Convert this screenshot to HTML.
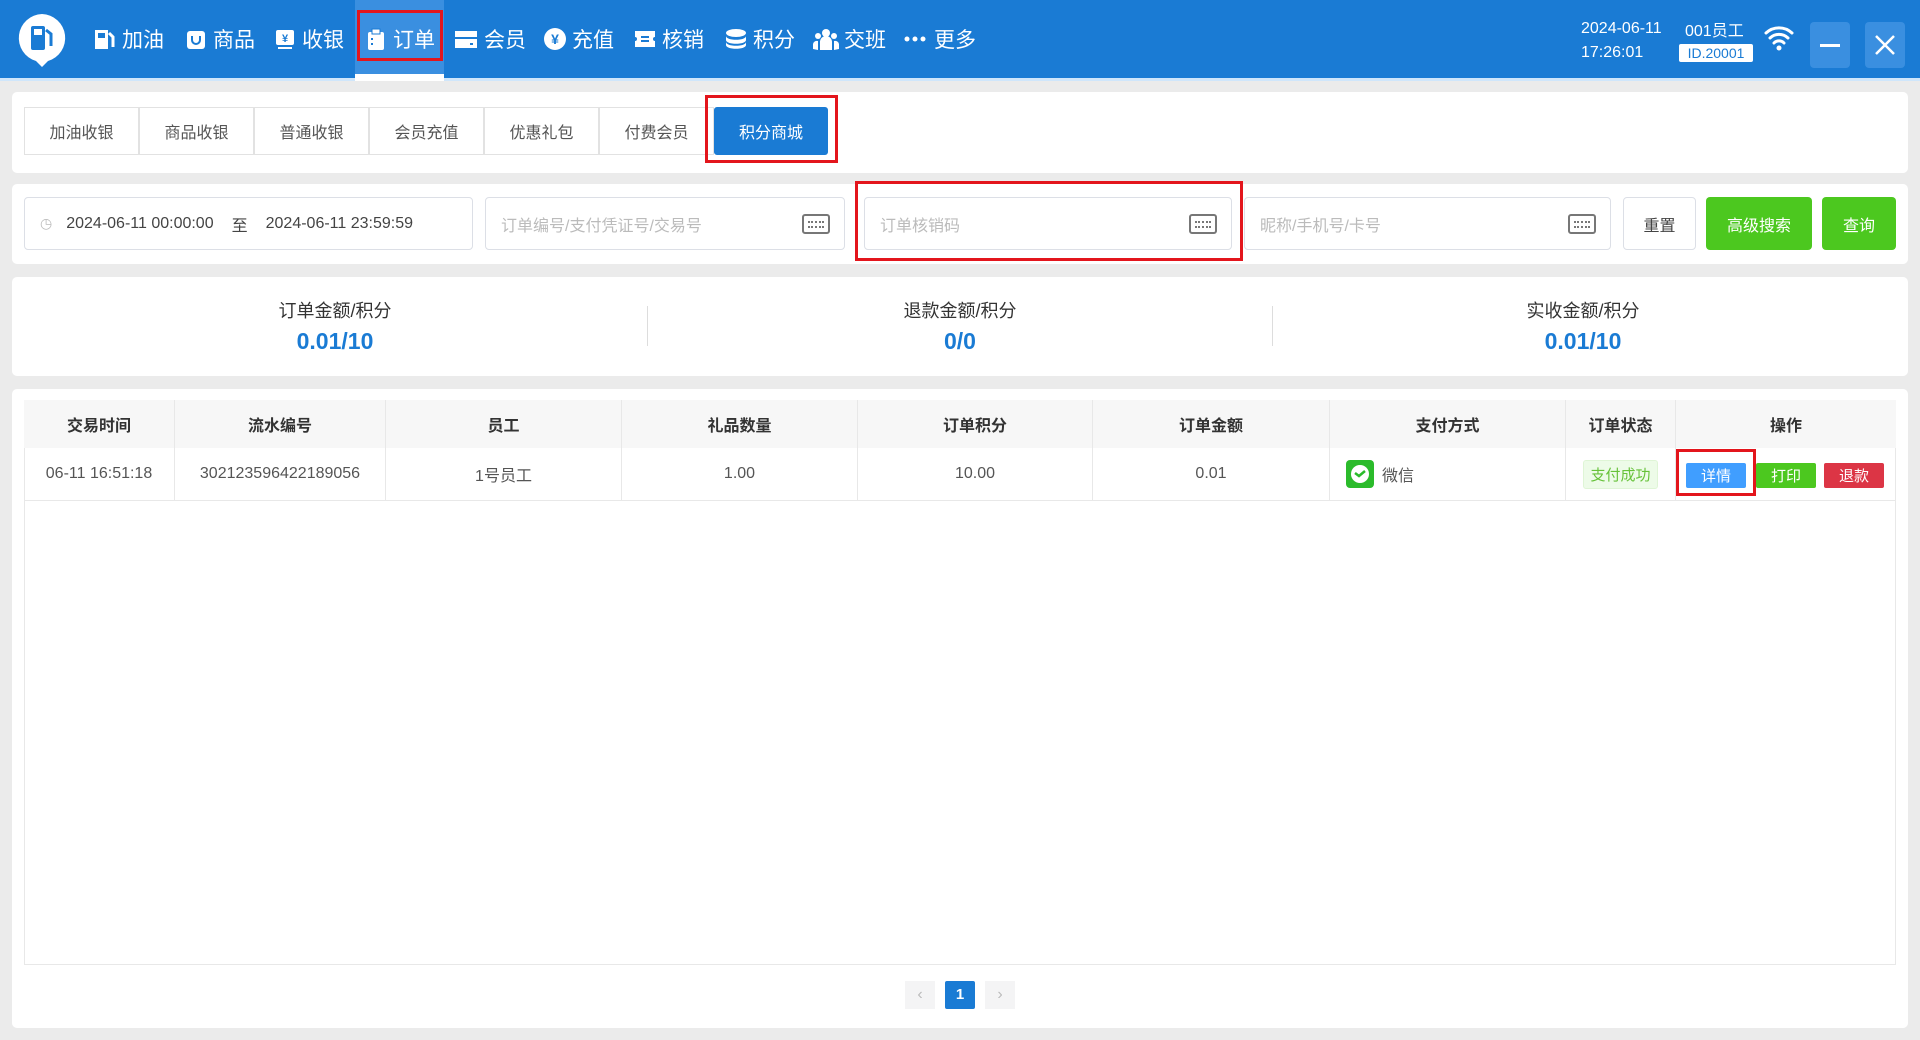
<!DOCTYPE html>
<html><head><meta charset="utf-8"><style>
*{margin:0;padding:0;box-sizing:border-box}
body{width:1920px;height:1040px;background:#ebebeb;font-family:"Liberation Sans","Noto Sans CJK SC",sans-serif;position:relative;overflow:hidden;color:#333}
.a{position:absolute}
.hdr{left:0;top:0;width:1920px;height:78px;background:#1a7bd4}
.hl{left:0;top:78px;width:1920px;height:3px;background:#cfe6fb}
.nav{top:0;height:78px;display:flex;align-items:center;color:#fff;font-size:21px}
.nav svg{margin-right:5px}
.card{background:#fff;border-radius:5px}
.tab{top:107px;height:48px;width:115px;border:1px solid #e2e2e2;background:#fff;font-size:16px;color:#555;display:flex;align-items:center;justify-content:center}
.inp{top:197px;height:53px;border:1px solid #dcdfe6;border-radius:4px;background:#fff;font-size:16px;color:#bbb;display:flex;align-items:center;padding-left:15px}
.kb{position:absolute;right:14px;top:16px;width:28px;height:20px;border:2px solid #777;border-radius:3px}
.kb:after{content:"";position:absolute;left:4px;right:4px;top:5px;height:3px;border-top:2px dotted #777;border-bottom:2px dotted #777}
.btn{top:197px;height:53px;border-radius:4px;display:flex;align-items:center;justify-content:center;font-size:16px}
.red{border:3px solid #e3151c}
.lab{font-size:18px;color:#333;text-align:center;width:300px}
.val{font-size:23px;font-weight:bold;color:#1a7bd4;text-align:center;width:300px}
.th,.td{display:flex;align-items:center;justify-content:center;border-right:1px solid #e8e8e8;font-size:16px}
.th{top:400px;height:48px;background:#f7f7f7;color:#333;font-weight:bold}
.td{top:448px;height:53px;color:#555;border-bottom:1px solid #e8e8e8}
.ab{top:463px;height:25px;width:60px;border-radius:2px;color:#fff;font-size:15px;display:flex;align-items:center;justify-content:center}
</style></head><body>
<div class="a hdr"></div><div class="a hl"></div>
<div class="a" style="left:355px;top:0;width:89px;height:78px;background:#3a8fe0"></div>
<div class="a" style="left:355px;top:74px;width:89px;height:7px;background:#fff"></div>
<!-- logo -->
<svg class="a" style="left:16px;top:12px" width="52" height="56" viewBox="0 0 52 56"><path d="M26 2a24 24 0 0 1 6 47l-6 6-6-6A24 24 0 0 1 26 2z" fill="#fff"/><rect x="15" y="14" width="14" height="24" rx="2" fill="#1a7bd4"/><rect x="18" y="17" width="8" height="6" fill="#fff"/><path d="M30 18l5 4v12" stroke="#1a7bd4" stroke-width="3" fill="none"/></svg>
<div class="a nav" style="left:93px"><svg width="24" height="24"><rect x="2" y="3" width="13" height="19" fill="#fff"/><rect x="5" y="6" width="7" height="5" fill="#1a7bd4"/><path d="M16 6l4 4v10" stroke="#fff" stroke-width="3" fill="none"/></svg>加油</div>
<div class="a nav" style="left:184px"><svg width="24" height="24"><rect x="3" y="4" width="18" height="18" rx="3" fill="#fff"/><path d="M8 9v4a4 4 0 0 0 8 0V9" stroke="#1a7bd4" stroke-width="2" fill="none"/></svg>商品</div>
<div class="a nav" style="left:273px"><svg width="24" height="24"><rect x="3" y="3" width="18" height="15" rx="2" fill="#fff"/><rect x="5" y="20" width="14" height="2" fill="#fff"/><text x="12" y="15" font-size="11" fill="#1a7bd4" text-anchor="middle" font-weight="bold">¥</text></svg>收银</div>
<div class="a nav" style="left:364px"><svg width="24" height="24"><rect x="4" y="5" width="16" height="18" rx="2" fill="#fff"/><rect x="8" y="2" width="8" height="5" fill="#fff" stroke="#1a7bd4"/><path d="M8 11v2M8 16v2" stroke="#1a7bd4" stroke-width="2"/></svg>订单</div>
<div class="a nav" style="left:453px"><svg width="26" height="24"><rect x="2" y="4" width="22" height="6" fill="#fff"/><rect x="2" y="12" width="22" height="9" fill="#fff"/><rect x="17" y="16" width="3" height="2" fill="#1a7bd4"/></svg>会员</div>
<div class="a nav" style="left:543px"><svg width="24" height="24"><circle cx="12" cy="12" r="11" fill="#fff"/><text x="12" y="17" font-size="14" fill="#1a7bd4" text-anchor="middle" font-weight="bold">¥</text></svg>充值</div>
<div class="a nav" style="left:633px"><svg width="24" height="24"><path d="M2 4h20v6a2 2 0 0 0 0 4v6H2v-6a2 2 0 0 0 0-4z" fill="#fff"/><rect x="8" y="9" width="8" height="2" fill="#1a7bd4"/><rect x="8" y="13" width="8" height="2" fill="#1a7bd4"/></svg>核销</div>
<div class="a nav" style="left:724px"><svg width="24" height="24"><ellipse cx="12" cy="6" rx="10" ry="4" fill="#fff"/><path d="M2 9c0 5 20 5 20 0v4c0 5-20 5-20 0zM2 15c0 5 20 5 20 0v3c0 5-20 5-20 0z" fill="#fff"/></svg>积分</div>
<div class="a nav" style="left:813px"><svg width="26" height="24"><circle cx="13" cy="6" r="4" fill="#fff"/><circle cx="5" cy="9" r="3" fill="#fff"/><circle cx="21" cy="9" r="3" fill="#fff"/><path d="M7 23v-8a6 6 0 0 1 12 0v8zM0 22v-5a4 4 0 0 1 5-3v9zM26 22v-5a4 4 0 0 0-5-3v9z" fill="#fff"/></svg>交班</div>
<div class="a nav" style="left:903px"><svg width="26" height="24"><circle cx="4" cy="12" r="2.5" fill="#fff"/><circle cx="12" cy="12" r="2.5" fill="#fff"/><circle cx="20" cy="12" r="2.5" fill="#fff"/></svg>更多</div>
<div class="a red" style="left:357px;top:10px;width:86px;height:51px"></div>
<div class="a" style="left:1581px;top:17px;color:#fff;font-size:16px;line-height:24px">2024-06-11<br>17:26:01</div>
<div class="a" style="left:1685px;top:17px;color:#fff;font-size:16px">001员工</div>
<div class="a" style="left:1679px;top:44px;width:74px;height:18px;background:#fff;border-radius:2px;color:#1a7bd4;font-size:14px;text-align:center;line-height:18px">ID.20001</div>
<svg class="a" style="left:1763px;top:24px" width="32" height="28" viewBox="0 0 32 28"><path d="M3 9a19 19 0 0 1 26 0M7 14a13 13 0 0 1 18 0M11 19a7 7 0 0 1 10 0" stroke="#fff" stroke-width="3" fill="none" stroke-linecap="round"/><circle cx="16" cy="24" r="2.5" fill="#fff"/></svg>
<div class="a" style="left:1810px;top:22px;width:40px;height:46px;background:#3a8fe0;border-radius:4px"><div class="a" style="left:10px;top:22px;width:20px;height:3px;background:#fff"></div></div>
<div class="a" style="left:1865px;top:22px;width:40px;height:46px;background:#3a8fe0;border-radius:4px"><svg class="a" style="left:9px;top:12px" width="22" height="22"><path d="M2 2l18 18M20 2L2 20" stroke="#fff" stroke-width="2.5"/></svg></div>

<!-- tabs card -->
<div class="a card" style="left:12px;top:92px;width:1896px;height:81px"></div>
<div class="a tab" style="left:24px">加油收银</div>
<div class="a tab" style="left:139px">商品收银</div>
<div class="a tab" style="left:254px">普通收银</div>
<div class="a tab" style="left:369px">会员充值</div>
<div class="a tab" style="left:484px">优惠礼包</div>
<div class="a tab" style="left:599px">付费会员</div>
<div class="a tab" style="left:714px;width:114px;background:#1a7bd4;color:#fff;border-color:#1a7bd4;border-radius:3px">积分商城</div>
<div class="a red" style="left:705px;top:95px;width:133px;height:68px"></div>

<!-- search -->
<div class="a card" style="left:12px;top:184px;width:1896px;height:80px"></div>
<div class="a inp" style="left:24px;width:449px;color:#444"><span style="color:#bbb;font-size:14px;margin-right:14px">◷</span>2024-06-11 00:00:00<span style="margin:0 18px">至</span>2024-06-11 23:59:59</div>
<div class="a inp" style="left:485px;width:360px">订单编号/支付凭证号/交易号<div class="kb"></div></div>
<div class="a inp" style="left:864px;width:368px">订单核销码<div class="kb"></div></div>
<div class="a red" style="left:855px;top:181px;width:388px;height:80px"></div>
<div class="a inp" style="left:1244px;width:367px">昵称/手机号/卡号<div class="kb"></div></div>
<div class="a btn" style="left:1623px;width:73px;border:1px solid #dcdfe6;color:#444">重置</div>
<div class="a btn" style="left:1706px;width:106px;background:#4cc81f;color:#fff">高级搜索</div>
<div class="a btn" style="left:1822px;width:74px;background:#4cc81f;color:#fff">查询</div>

<!-- stats -->
<div class="a card" style="left:12px;top:277px;width:1896px;height:99px"></div>
<div class="a lab" style="left:185px;top:297px">订单金额/积分</div>
<div class="a val" style="left:185px;top:328px">0.01/10</div>
<div class="a lab" style="left:810px;top:297px">退款金额/积分</div>
<div class="a val" style="left:810px;top:328px">0/0</div>
<div class="a lab" style="left:1433px;top:297px">实收金额/积分</div>
<div class="a val" style="left:1433px;top:328px">0.01/10</div>
<div class="a" style="left:647px;top:306px;width:1px;height:40px;background:#ddd"></div>
<div class="a" style="left:1272px;top:306px;width:1px;height:40px;background:#ddd"></div>

<!-- table -->
<div class="a card" style="left:12px;top:389px;width:1896px;height:639px"></div>
<div class="a" style="left:24px;top:400px;width:1872px;height:565px;border:1px solid #e8e8e8"></div>
<div class="a th" style="left:24px;width:151px">交易时间</div>
<div class="a th" style="left:175px;width:211px">流水编号</div>
<div class="a th" style="left:386px;width:236px">员工</div>
<div class="a th" style="left:622px;width:236px">礼品数量</div>
<div class="a th" style="left:858px;width:235px">订单积分</div>
<div class="a th" style="left:1093px;width:237px">订单金额</div>
<div class="a th" style="left:1330px;width:236px">支付方式</div>
<div class="a th" style="left:1566px;width:110px">订单状态</div>
<div class="a th" style="left:1676px;width:220px;border-right:none">操作</div>
<div class="a td" style="left:24px;width:151px">06-11 16:51:18</div>
<div class="a td" style="left:175px;width:211px">302123596422189056</div>
<div class="a td" style="left:386px;width:236px">1号员工</div>
<div class="a td" style="left:622px;width:236px">1.00</div>
<div class="a td" style="left:858px;width:235px">10.00</div>
<div class="a td" style="left:1093px;width:237px">0.01</div>
<div class="a td" style="left:1330px;width:236px;justify-content:flex-start;padding-left:16px"><svg width="28" height="28" style="margin-right:8px"><rect width="28" height="28" rx="4" fill="#2bbb2b"/><circle cx="14" cy="14" r="9" fill="#fff"/><path d="M9 13l4 3 6-5" stroke="#2bbb2b" stroke-width="2.5" fill="none"/></svg>微信</div>
<div class="a td" style="left:1566px;width:110px"><span style="background:#edfbe8;border:1px solid #dff5d6;color:#67c23a;font-size:15px;padding:3px 6px;border-radius:3px">支付成功</span></div>
<div class="a td" style="left:1676px;width:220px;border-right:none"></div>
<div class="a ab" style="left:1686px;background:#409eff">详情</div>
<div class="a ab" style="left:1756px;background:#4cc81f">打印</div>
<div class="a ab" style="left:1824px;background:#dc3545">退款</div>
<div class="a red" style="left:1676px;top:449px;width:80px;height:47px"></div>
<div class="a" style="left:905px;top:981px;width:30px;height:28px;background:#f4f4f5;color:#bbb;text-align:center;line-height:28px;font-size:16px">‹</div>
<div class="a" style="left:945px;top:981px;width:30px;height:28px;background:#1a7bd4;color:#fff;text-align:center;line-height:28px;font-size:15px;font-weight:bold;border-radius:2px">1</div>
<div class="a" style="left:985px;top:981px;width:30px;height:28px;background:#f4f4f5;color:#bbb;text-align:center;line-height:28px;font-size:16px">›</div>
</body></html>
